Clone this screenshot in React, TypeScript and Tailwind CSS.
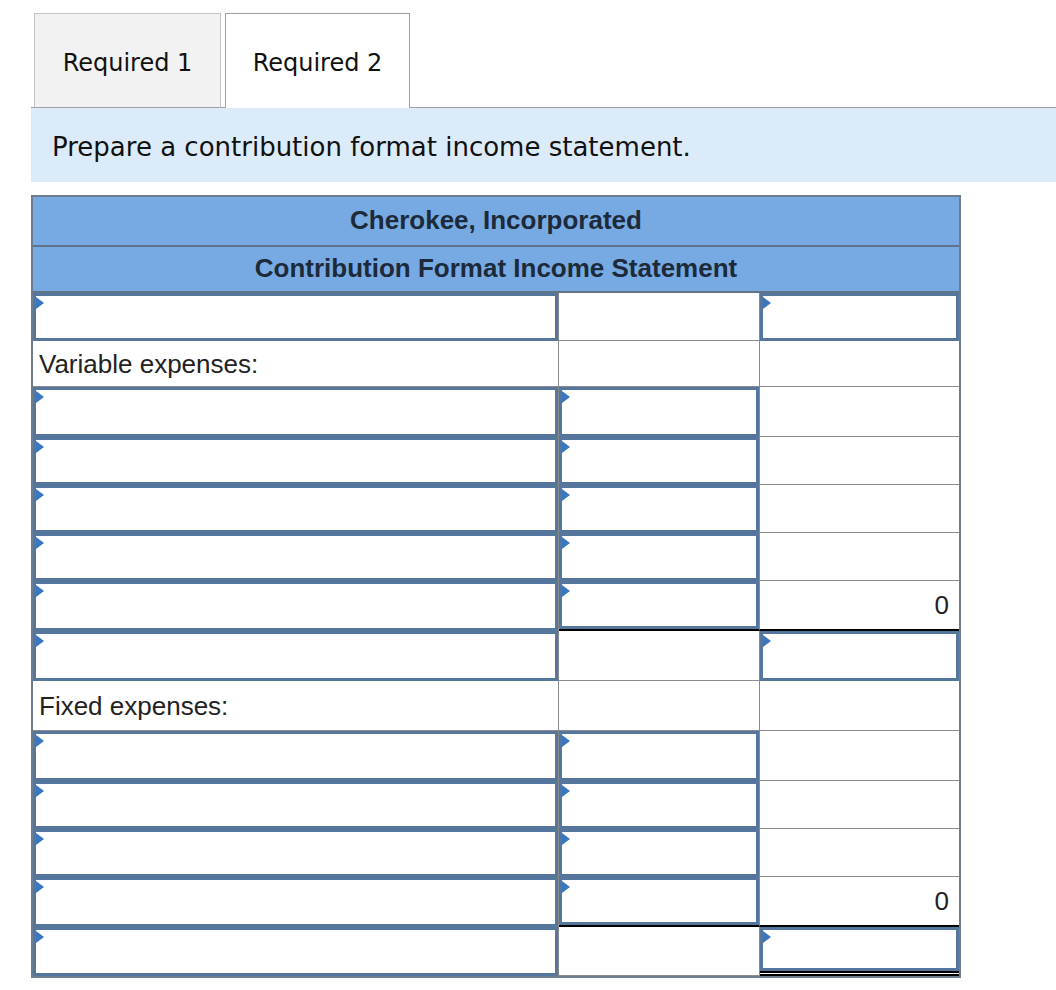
import React from "react";

type CellType = "input" | "plain" | "label";
type Cell = { t: CellType; text?: string; under?: "single" | "double"; num?: string };

const I: Cell = { t: "input" };
const P: Cell = { t: "plain" };

const rows: { h: number; cells: Cell[] }[] = [
  { h: 48, cells: [I, P, I] },
  { h: 46, cells: [{ t: "label", text: "Variable expenses:" }, P, P] },
  { h: 50, cells: [I, I, P] },
  { h: 48, cells: [I, I, P] },
  { h: 48, cells: [I, I, P] },
  { h: 48, cells: [I, I, P] },
  { h: 50, cells: [I, { t: "input", under: "single" }, { t: "plain", num: "0", under: "single" }] },
  { h: 50, cells: [I, P, I] },
  { h: 50, cells: [{ t: "label", text: "Fixed expenses:" }, P, P] },
  { h: 50, cells: [I, I, P] },
  { h: 48, cells: [I, I, P] },
  { h: 48, cells: [I, I, P] },
  { h: 50, cells: [I, { t: "input", under: "single" }, { t: "plain", num: "0", under: "single" }] },
  { h: 49, cells: [I, P, { t: "input", under: "double" }] },
];

function Triangle() {
  return (
    <span className="absolute left-0 top-[1px] w-0 h-0 border-y-[6px] border-y-transparent border-l-[8px] border-l-[#3b77c0]" />
  );
}

function CellView({ c, col }: { c: Cell; col: number }) {
  const right = col < 2 ? "border-r border-r-[#8a8a8a]" : "";
  let bottom = "border-b border-b-[#8a8a8a]";
  if (c.under === "single") bottom = "border-b-2 border-b-black";
  if (c.under === "double") bottom = "border-b-[5px] border-double border-b-black";
  if (c.t === "input") {
    return (
      <div className={`flex ${right} ${c.under ? bottom : ""}`}>
        <div className="relative flex-1 border-[3px] border-[#55769d] bg-white">
          <Triangle />
        </div>
      </div>
    );
  }
  return (
    <div className={`flex items-center ${right} ${bottom} ${c.num ? "justify-end pr-[10px]" : "pl-[6px]"}`}>
      {c.text && <span className="text-[26px] leading-none text-[#222]">{c.text}</span>}
      {c.num && <span className="text-[26px] leading-none text-[#222]">{c.num}</span>}
    </div>
  );
}

export default function App() {
  return (
    <div
      className="bg-white min-h-[990px] w-[1056px] pt-[13px] pl-[31px]"
      style={{ fontFamily: "'Liberation Sans', Arial, sans-serif" }}
    >
      <div className="flex items-end h-[95px]" style={{ fontFamily: "'DejaVu Sans', Verdana, sans-serif" }}>
        <div className="w-[3px] h-full border-b border-b-[#a0a0a0]" />
        <div className="w-[187px] h-full bg-[#f2f2f2] border border-[#c4c4c4] border-b-[#a0a0a0] flex items-center justify-center text-[24px] leading-none text-[#111] pt-[4px]">
          Required 1
        </div>
        <div className="w-[4px] h-full border-b border-b-[#a0a0a0]" />
        <div className="w-[185px] h-full bg-white border border-b-0 border-[#a0a0a0] flex items-center justify-center text-[24px] leading-none text-[#111] pt-[4px]">
          Required 2
        </div>
        <div className="flex-1 h-full border-b border-b-[#a0a0a0]" />
      </div>
      <div
        className="h-[74px] bg-[#dcebf9] flex items-center pl-[21px] text-[26px] leading-none text-[#111] pt-[4px]"
        style={{ fontFamily: "'DejaVu Sans', Verdana, sans-serif" }}
      >
        Prepare a contribution format income statement.
      </div>
      <div className="mt-[13px] w-[930px] border-2 border-[#6d7d8f]">
        <div className="h-[50px] bg-[#77aae3] border-b-2 border-b-[#617386] flex items-center justify-center font-bold text-[26px] leading-none text-[#1c2a3a] pb-[2px]">
          Cherokee, Incorporated
        </div>
        <div className="h-[46px] bg-[#77aae3] border-b-2 border-b-[#617386] flex items-center justify-center font-bold text-[26px] leading-none text-[#1c2a3a] pb-[2px]">
          Contribution Format Income Statement
        </div>
        {rows.map((r, i) => (
          <div key={i} className="grid grid-cols-[526px_201px_199px]" style={{ height: r.h }}>
            {r.cells.map((c, j) => (
              <CellView key={j} c={c} col={j} />
            ))}
          </div>
        ))}
      </div>
    </div>
  );
}
